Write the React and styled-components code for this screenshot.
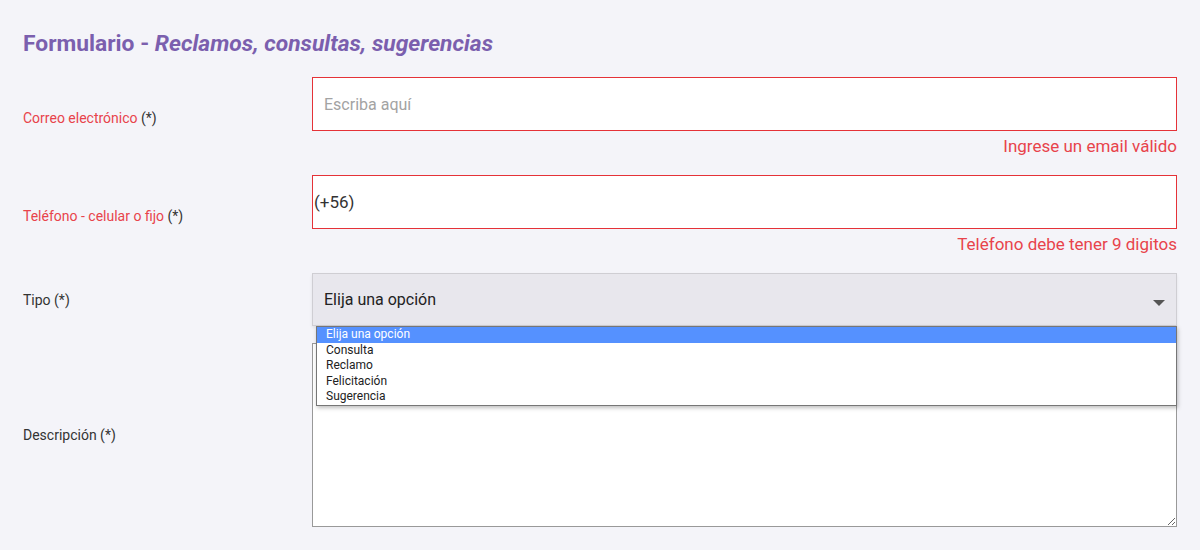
import React from 'react'
import styled, { createGlobalStyle } from 'styled-components'

const GlobalStyle = createGlobalStyle`
  html, body {
    margin: 0;
    padding: 0;
    background: #f4f4f9;
    font-family: Roboto, "Noto Sans", sans-serif;
  }
`

const Page = styled.div`
  padding: 32px 0 0 23px;
  width: 1154px;
`

const Title = styled.h1`
  margin: 0;
  font-size: 22.8px;
  line-height: 24px;
  font-weight: bold;
  color: #7b5fae;
`

const Subtitle = styled.em`
  font-style: italic;
`

const Form = styled.form`
  margin-top: 21px;
  display: grid;
  grid-template-columns: 289px 865px;
  row-gap: 17px;
`

const Label = styled.label`
  align-self: center;
  font-size: 14px;
  color: ${(props) => (props.invalid ? '#e8434b' : '#333')};
`

const Required = styled.span`
  color: #333;
`

const Field = styled.div`
  display: flex;
  flex-direction: column;
  position: relative;
`

const Input = styled.input`
  box-sizing: border-box;
  height: 54px;
  width: 100%;
  margin: 0;
  padding: 0 ${(props) => (props.flush ? '1px' : '11px')};
  border: 1px solid #e53238;
  background: #fff;
  font-family: Roboto, sans-serif;
  font-size: ${(props) => (props.flush ? '17px' : '16px')};
  color: #333;
  outline: none;

  &::placeholder {
    color: #a3a3a3;
  }
`

const ErrorText = styled.div`
  margin-top: 3px;
  line-height: 24px;
  font-size: 17px;
  color: #e8434b;
  text-align: right;
`

const SelectBox = styled.div`
  box-sizing: border-box;
  height: 53px;
  display: flex;
  align-items: center;
  justify-content: space-between;
  padding: 0 11px;
  border: 1px solid #cfced3;
  background: #e8e7ed;
  box-shadow: 0 2px 3px rgba(0, 0, 0, 0.08);
  font-size: 16px;
  color: #222;
`

const Caret = styled.span`
  width: 0;
  height: 0;
  margin-top: 6px;
  border-left: 6px solid transparent;
  border-right: 6px solid transparent;
  border-top: 6px solid #555;
`

const OptionList = styled.ul`
  position: absolute;
  top: 53px;
  left: 4px;
  right: 0;
  z-index: 2;
  margin: 0;
  padding: 0;
  list-style: none;
  background: #fff;
  border: 1px solid #767676;
  box-shadow: 1px 2px 4px rgba(0, 0, 0, 0.25);
`

const Option = styled.li`
  padding: 0 9px;
  font-size: 12px;
  line-height: 15.6px;
  color: ${(props) => (props.active ? '#fff' : '#222')};
  background: ${(props) => (props.active ? '#5591ff' : 'transparent')};
`

const TextArea = styled.textarea`
  box-sizing: border-box;
  display: block;
  width: 100%;
  height: 184px;
  margin: 0;
  border: 1px solid #999;
  background: #fff;
  font-family: Roboto, sans-serif;
  resize: both;
  outline: none;
`

const options = ['Elija una opción', 'Consulta', 'Reclamo', 'Felicitación', 'Sugerencia']

function App() {
  return (
    <Page>
      <GlobalStyle />
      <Title>
        Formulario - <Subtitle>Reclamos, consultas, sugerencias</Subtitle>
      </Title>
      <Form>
        <Label invalid>
          Correo electrónico <Required>(*)</Required>
        </Label>
        <Field>
          <Input placeholder="Escriba aquí" readOnly />
          <ErrorText>Ingrese un email válido</ErrorText>
        </Field>

        <Label invalid>
          Teléfono - celular o fijo <Required>(*)</Required>
        </Label>
        <Field>
          <Input flush defaultValue="(+56)" readOnly />
          <ErrorText>Teléfono debe tener 9 digitos</ErrorText>
        </Field>

        <Label>Tipo (*)</Label>
        <Field>
          <SelectBox>
            <span>Elija una opción</span>
            <Caret />
          </SelectBox>
          <OptionList>
            {options.map((opt, i) => (
              <Option key={opt} active={i === 0}>{opt}</Option>
            ))}
          </OptionList>
        </Field>

        <Label>Descripción (*)</Label>
        <Field>
          <TextArea />
        </Field>
      </Form>
    </Page>
  )
}

export default App
